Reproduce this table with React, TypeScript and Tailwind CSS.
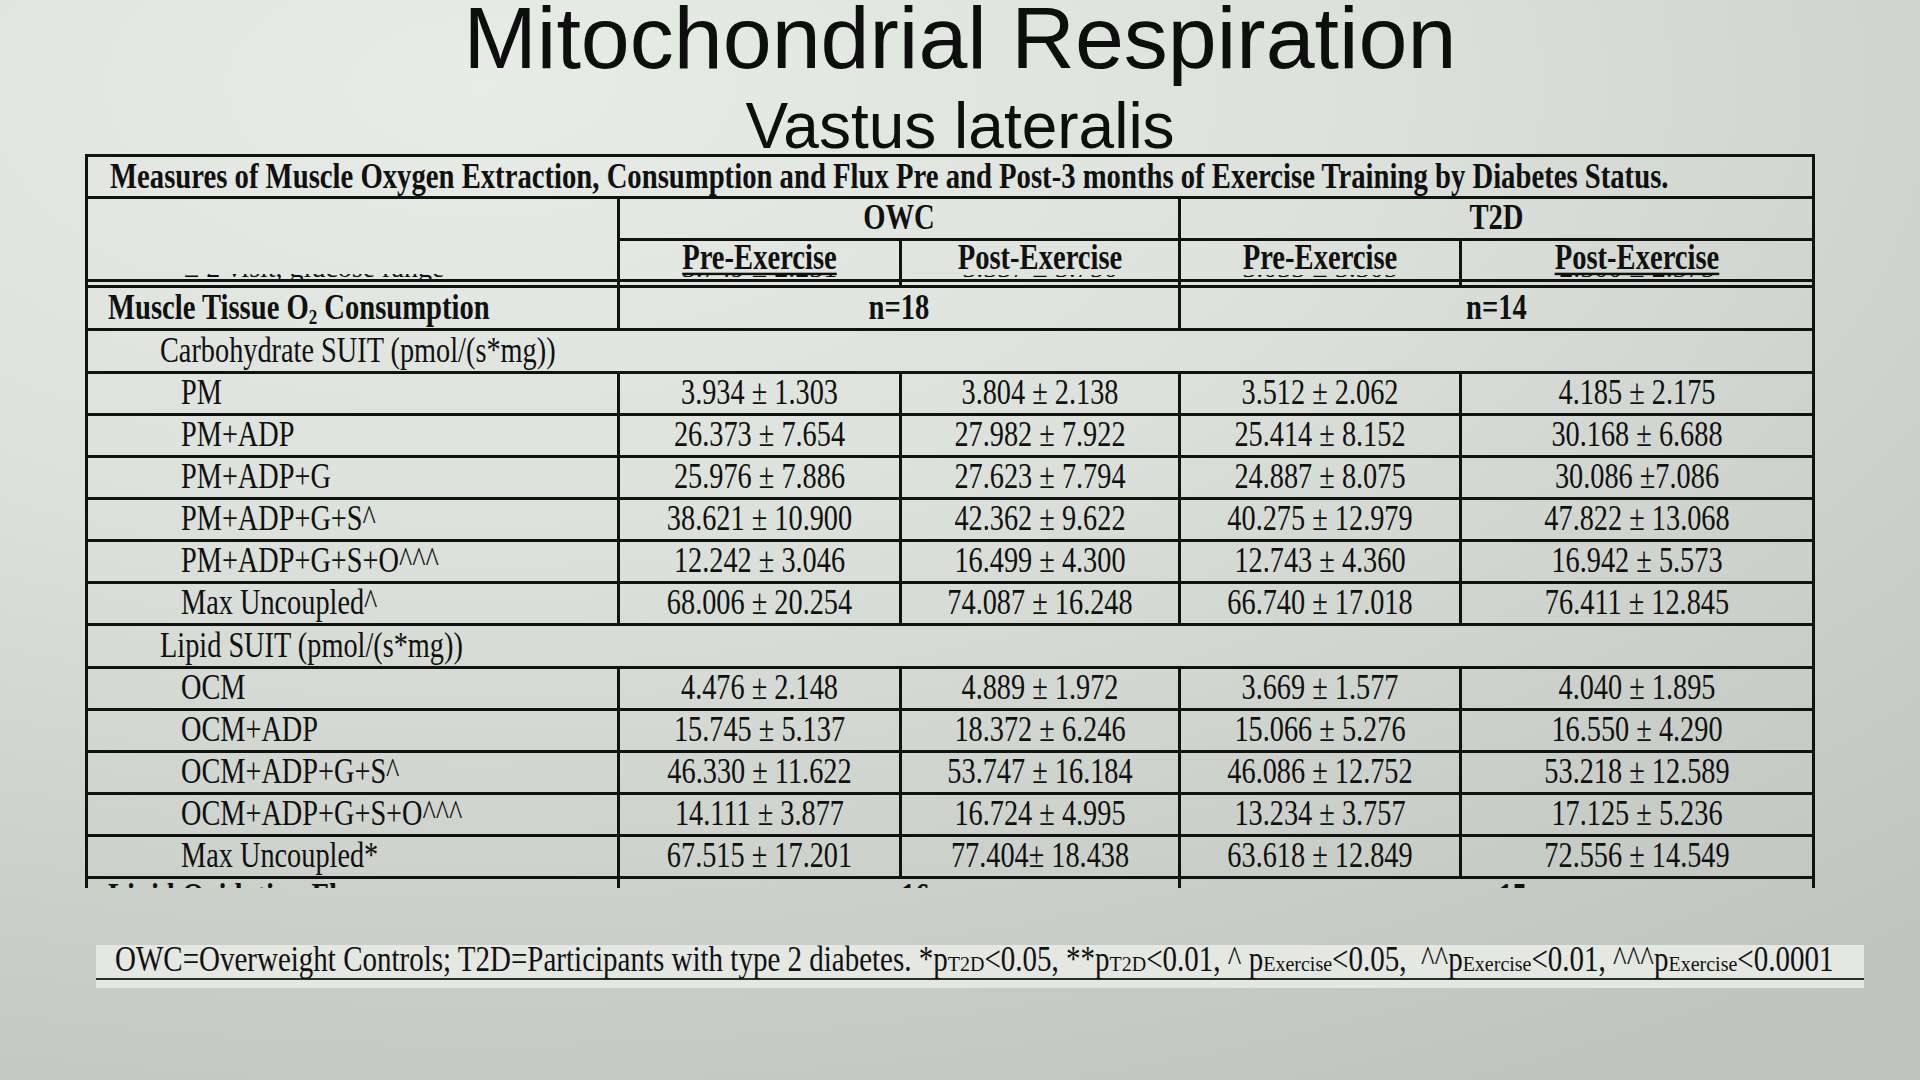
import React from "react";

const GRID = "grid grid-cols-[532px_282px_279px_281px_350px]";
const R = "border-r-[3px] border-[#121212]";
const BB = "border-b-[3px] border-[#121212]";

function T({ children, className = "" }: { children: React.ReactNode; className?: string }) {
  return (
    <span className={"inline-block leading-none whitespace-pre scale-y-[1.23] " + className}>
      {children}
    </span>
  );
}

function Rem({ text }: { text: string }) {
  return (
    <div className="h-[4px] overflow-hidden flex justify-center">
      <span className="block leading-none whitespace-pre text-[28px] mt-[-21px]">{text}</span>
    </div>
  );
}

type Row = { label: string; vals: string[] };

const carb: Row[] = [
  { label: "PM", vals: ["3.934 ± 1.303", "3.804 ± 2.138", "3.512 ± 2.062", "4.185 ± 2.175"] },
  { label: "PM+ADP", vals: ["26.373 ± 7.654", "27.982 ± 7.922", "25.414 ± 8.152", "30.168 ± 6.688"] },
  { label: "PM+ADP+G", vals: ["25.976 ± 7.886", "27.623 ± 7.794", "24.887 ± 8.075", "30.086 ±7.086"] },
  { label: "PM+ADP+G+S^", vals: ["38.621 ± 10.900", "42.362 ± 9.622", "40.275 ± 12.979", "47.822 ± 13.068"] },
  { label: "PM+ADP+G+S+O^^^", vals: ["12.242 ± 3.046", "16.499 ± 4.300", "12.743 ± 4.360", "16.942 ± 5.573"] },
  { label: "Max Uncoupled^", vals: ["68.006 ± 20.254", "74.087 ± 16.248", "66.740 ± 17.018", "76.411 ± 12.845"] },
];

const lipid: Row[] = [
  { label: "OCM", vals: ["4.476 ± 2.148", "4.889 ± 1.972", "3.669 ± 1.577", "4.040 ± 1.895"] },
  { label: "OCM+ADP", vals: ["15.745 ± 5.137", "18.372 ± 6.246", "15.066 ± 5.276", "16.550 ± 4.290"] },
  { label: "OCM+ADP+G+S^", vals: ["46.330 ± 11.622", "53.747 ± 16.184", "46.086 ± 12.752", "53.218 ± 12.589"] },
  { label: "OCM+ADP+G+S+O^^^", vals: ["14.111 ± 3.877", "16.724 ± 4.995", "13.234 ± 3.757", "17.125 ± 5.236"] },
  { label: "Max Uncoupled*", vals: ["67.515 ± 17.201", "77.404± 18.438", "63.618 ± 12.849", "72.556 ± 14.549"] },
];

function DataRow({ row }: { row: Row }) {
  return (
    <div className={`${GRID} h-[42px] ${BB}`}>
      <div className={`${R} flex items-center pl-[93px]`}>
        <T>{row.label}</T>
      </div>
      {row.vals.map((v, i) => (
        <div key={i} className={`flex items-center justify-center ${i < 3 ? R : ""}`}>
          <T>{v}</T>
        </div>
      ))}
    </div>
  );
}

function GroupRow({ label }: { label: string }) {
  return (
    <div className={`h-[43px] ${BB} flex items-center pl-[72px]`}>
      <T>{label}</T>
    </div>
  );
}

function Sub({ children }: { children: React.ReactNode }) {
  return <span className="inline-block leading-none text-[20px] relative top-[2px]">{children}</span>;
}

function F({ children }: { children: React.ReactNode }) {
  return <span className="inline-block leading-none whitespace-pre scale-y-[1.22]">{children}</span>;
}

export default function App() {
  return (
    <div className="w-[1920px] h-[1080px] overflow-hidden bg-[radial-gradient(ellipse_115%_105%_at_25%_8%,#e8ece7_0%,#dce1db_40%,#cacfc9_75%,#bfc4be_100%)] text-[#0d0e0d]">
      <h1 className="font-['Liberation_Sans',Arial,sans-serif] text-[88px] leading-[76px] font-normal text-center">
        Mitochondrial Respiration
      </h1>
      <h2 className="mt-[22px] font-['Liberation_Sans',Arial,sans-serif] text-[64px] leading-[56px] font-normal text-center">
        Vastus lateralis
      </h2>

      <div className="ml-[85px] w-[1730px] border-l-[3px] border-r-[3px] border-t-[3px] border-[#121212] font-['Liberation_Serif','Times_New_Roman',serif] text-[28.3px] text-[#101010]">
        {/* title row */}
        <div className={`h-[42px] ${BB} flex items-center pl-[22px]`}>
          <T className="font-bold text-[28.7px]">
            Measures of Muscle Oxygen Extraction, Consumption and Flux Pre and Post-3 months of Exercise Training by Diabetes Status.
          </T>
        </div>

        {/* group header rows */}
        <div className={`${GRID} grid-rows-[42px_41px]`}>
          <div className={`row-span-2 ${R} border-b-[3px] flex flex-col justify-end pl-[96px]`}>
            <div className="h-[5px] overflow-hidden">
              <span className="block leading-none whitespace-pre text-[28px] mt-[-20px]">≥ 2 visit, glucose range</span>
            </div>
          </div>
          <div className={`col-span-2 ${R} border-b-[3px] flex items-center justify-center`}>
            <T className="font-bold text-[28.6px]">OWC</T>
          </div>
          <div className={`col-span-2 ${BB} flex items-center justify-center`}>
            <T className="font-bold text-[28.6px]">T2D</T>
          </div>
          <div className={`${R} border-b-[3px] flex flex-col`}>
            <div className="flex-1 flex items-center justify-center">
              <T className="font-bold text-[28.6px] underline decoration-2 underline-offset-[3px]">Pre-Exercise</T>
            </div>
            <Rem text="3.749 ± 2.231" />
          </div>
          <div className={`${R} border-b-[3px] flex flex-col`}>
            <div className="flex-1 flex items-center justify-center">
              <T className="font-bold text-[28.6px]">Post-Exercise</T>
            </div>
            <Rem text="3.337 ± 3.750" />
          </div>
          <div className={`${R} border-b-[3px] flex flex-col`}>
            <div className="flex-1 flex items-center justify-center">
              <T className="font-bold text-[28.6px]">Pre-Exercise</T>
            </div>
            <Rem text="3.033 ± 3.305" />
          </div>
          <div className={`${BB} flex flex-col`}>
            <div className="flex-1 flex items-center justify-center">
              <T className="font-bold text-[28.6px] underline decoration-2 underline-offset-[3px]">Post-Exercise</T>
            </div>
            <Rem text="2.300 ± 2.375" />
          </div>
        </div>

        {/* double line gap */}
        <div className={`${GRID} h-[6px] ${BB}`}>
          <div className={R} />
          <div className={R} />
          <div className={R} />
          <div className={R} />
          <div />
        </div>

        {/* muscle tissue row */}
        <div className={`${GRID} h-[43px] ${BB}`}>
          <div className={`${R} flex items-center pl-[20px]`}>
            <T className="font-bold text-[28.6px]">
              Muscle Tissue O<span className="text-[17px] relative top-[4px]">2</span> Consumption
            </T>
          </div>
          <div className={`col-span-2 ${R} flex items-center justify-center`}>
            <T className="font-bold text-[28.6px]">n=18</T>
          </div>
          <div className="col-span-2 flex items-center justify-center">
            <T className="font-bold text-[28.6px]">n=14</T>
          </div>
        </div>

        <GroupRow label="Carbohydrate SUIT (pmol/(s*mg))" />
        {carb.map((r) => (
          <DataRow key={r.label} row={r} />
        ))}
        <GroupRow label="Lipid SUIT (pmol/(s*mg))" />
        {lipid.map((r) => (
          <DataRow key={r.label} row={r} />
        ))}

        {/* cut-off row */}
        <div className="h-[9px] overflow-hidden">
          <div className={`${GRID} h-[42px] mt-[-3px]`}>
            <div className={`${R} flex items-center pl-[20px]`}>
              <T className="font-bold text-[28.6px]">Lipid Oxidation Flux</T>
            </div>
            <div className={`col-span-2 ${R} flex items-center justify-center`}>
              <T className="font-bold text-[28.6px]">n=16</T>
            </div>
            <div className="col-span-2 flex items-center justify-center">
              <T className="font-bold text-[28.6px]">n=15</T>
            </div>
          </div>
        </div>
      </div>

      {/* footnote */}
      <div className="mt-[57px] ml-[96px] w-[1768px] bg-[#e4e7e2] pb-[8px]">
        <div className="h-[35px] border-b-2 border-[#2b2b2b] pl-[19px]">
          <div className="leading-none whitespace-nowrap text-[29px] font-['Liberation_Serif','Times_New_Roman',serif] text-[#111]">
            <F>OWC=Overweight Controls; T2D=Participants with type 2 diabetes. *p</F>
            <Sub>T2D</Sub>
            <F>{"<0.05, **p"}</F>
            <Sub>T2D</Sub>
            <F>{"<0.01, ^ p"}</F>
            <Sub>Exercise</Sub>
            <F>{"<0.05,  ^^p"}</F>
            <Sub>Exercise</Sub>
            <F>{"<0.01, ^^^p"}</F>
            <Sub>Exercise</Sub>
            <F>{"<0.0001"}</F>
          </div>
        </div>
      </div>
    </div>
  );
}
